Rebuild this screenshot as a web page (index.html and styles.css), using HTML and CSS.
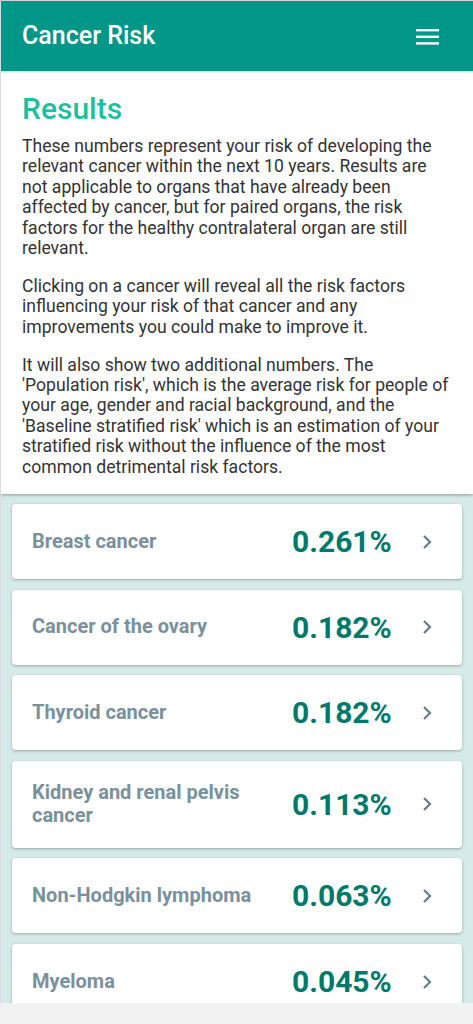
FILE: index.html
```html
<!DOCTYPE html>
<html lang="en">

<head>
    <meta charset="UTF-8">
    <meta name="viewport" content="width=device-width, initial-scale=1.0">
    <title>Cancer Risk</title>
    <link rel="stylesheet" href="styles.css">
</head>

<body>
    <div class="app">
        <div class="topbar">
            <div class="title">Cancer Risk</div>
            <svg class="menu" width="23" height="16" viewBox="0 0 23 16">
                <rect x="0" y="0" width="23" height="2.4" fill="#fff"></rect>
                <rect x="0" y="6.6" width="23" height="2.4" fill="#fff"></rect>
                <rect x="0" y="13.2" width="23" height="2.4" fill="#fff"></rect>
            </svg>
        </div>

        <div class="intro">
            <h1>Results</h1>
            <p>These numbers represent your risk of developing the relevant cancer within the next 10 years. Results are not applicable to organs that have already been affected by cancer, but for paired organs, the risk factors for the healthy contralateral organ are still relevant.</p>
            <p>Clicking on a cancer will reveal all the risk factors influencing your risk of that cancer and any improvements you could make to improve it.</p>
            <p>It will also show two additional numbers. The 'Population risk', which is the average risk for people of your age, gender and racial background, and the 'Baseline stratified risk' which is an estimation of your stratified risk without the influence of the most common detrimental risk factors.</p>
        </div>

        <ul class="list">
            <li class="card">
                <div class="name">Breast cancer</div>
                <div class="value">0.261%</div>
                <svg class="arrow" width="10" height="16" viewBox="0 0 10 16"><path d="M2 2 L8 8 L2 14" fill="none" stroke="#647f8c" stroke-width="2.2"></path></svg>
            </li>
            <li class="card">
                <div class="name">Cancer of the ovary</div>
                <div class="value">0.182%</div>
                <svg class="arrow" width="10" height="16" viewBox="0 0 10 16"><path d="M2 2 L8 8 L2 14" fill="none" stroke="#647f8c" stroke-width="2.2"></path></svg>
            </li>
            <li class="card">
                <div class="name">Thyroid cancer</div>
                <div class="value">0.182%</div>
                <svg class="arrow" width="10" height="16" viewBox="0 0 10 16"><path d="M2 2 L8 8 L2 14" fill="none" stroke="#647f8c" stroke-width="2.2"></path></svg>
            </li>
            <li class="card">
                <div class="name">Kidney and renal pelvis cancer</div>
                <div class="value">0.113%</div>
                <svg class="arrow" width="10" height="16" viewBox="0 0 10 16"><path d="M2 2 L8 8 L2 14" fill="none" stroke="#647f8c" stroke-width="2.2"></path></svg>
            </li>
            <li class="card">
                <div class="name">Non-Hodgkin lymphoma</div>
                <div class="value">0.063%</div>
                <svg class="arrow" width="10" height="16" viewBox="0 0 10 16"><path d="M2 2 L8 8 L2 14" fill="none" stroke="#647f8c" stroke-width="2.2"></path></svg>
            </li>
            <li class="card">
                <div class="name">Myeloma</div>
                <div class="value">0.045%</div>
                <svg class="arrow" width="10" height="16" viewBox="0 0 10 16"><path d="M2 2 L8 8 L2 14" fill="none" stroke="#647f8c" stroke-width="2.2"></path></svg>
            </li>
        </ul>
    </div>
    <div class="navbar"></div>
</body>

</html>
```

FILE: styles.css
```css
body,
ul,
li,
h1,
p {
    margin: 0;
    padding: 0;
    list-style: none;
}

body {
    font-family: Roboto, "Liberation Sans", sans-serif;
    background: #d6ebe9;
    border-top: 1px solid #d4d4d4;
    border-left: 1px solid #dcdcdc;
    overflow: hidden;
    height: 1023px;
    box-sizing: border-box;
}

.topbar {
    height: 70px;
    background: #009688;
    display: flex;
    align-items: center;
    justify-content: space-between;
    padding: 0 34px 0 21px;
    box-shadow: 0 1px 2px rgba(0, 0, 0, 0.2);
    position: relative;
}

.title {
    color: #fff;
    font-size: 25px;
    font-weight: 500;
    padding-bottom: 1px;
}

.menu {
    display: block;
    margin-top: 2px;
}

.intro {
    background: #fff;
    padding: 20px 18px 17px 21px;
    box-shadow: 0 1px 3px rgba(0, 0, 0, 0.35);
    color: #333;
}

.intro h1 {
    color: #1dbf9f;
    font-size: 30px;
    font-weight: 500;
    line-height: 36px;
    margin-bottom: 9px;
}

.intro p {
    font-size: 17.6px;
    line-height: 20.4px;
    margin-bottom: 17.5px;
}

.intro p:last-child {
    margin-bottom: 0;
}

.list {
    padding: 10px 11px 0 11px;
}

.card {
    background: #fff;
    border-radius: 4px;
    box-shadow: 0 1px 3px rgba(0, 0, 0, 0.3);
    display: flex;
    align-items: center;
    padding: 20px 30px 20px 20px;
    margin-bottom: 10.6px;
}

.name {
    flex: 1;
    color: #7a919d;
    font-size: 20px;
    font-weight: bold;
    line-height: 23.5px;
}

.value {
    width: 130px;
    color: #00796b;
    font-size: 30px;
    font-weight: bold;
    line-height: 35px;
}

.arrow {
    display: block;
}

.navbar {
    position: fixed;
    left: 0;
    right: 0;
    bottom: 0;
    height: 21px;
    background: #f2f2f2;
}
```
